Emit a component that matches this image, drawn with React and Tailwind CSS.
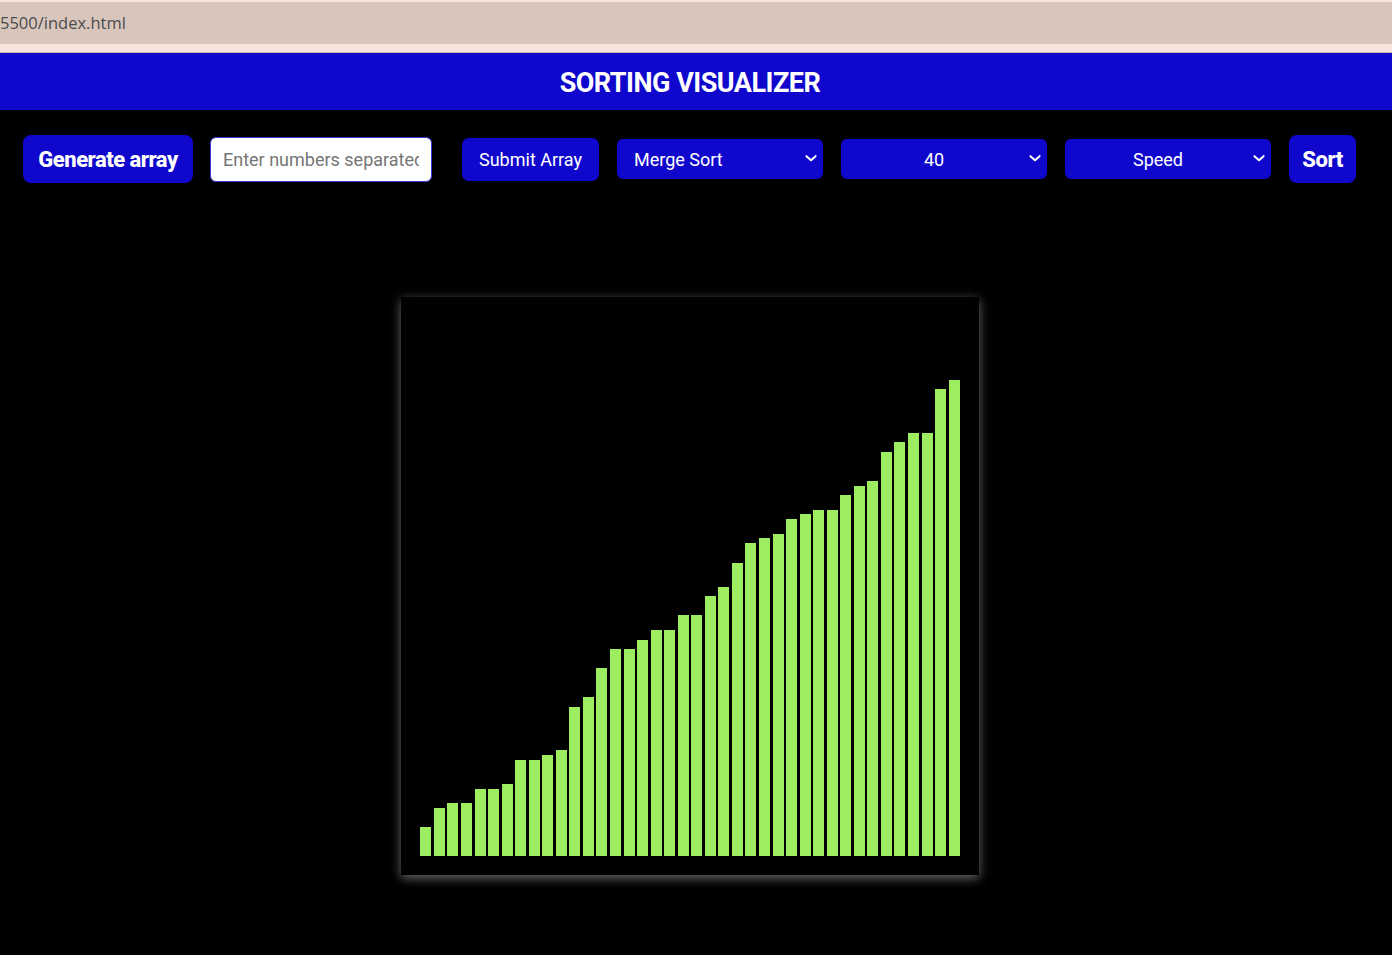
import React from 'react';

// bar heights in px, measured from the baseline
const BARS = [
  29, 48, 53, 53, 67, 67, 72, 96, 96, 101, 106, 149, 159, 188, 207, 207, 216, 226, 226, 241,
  241, 260, 269, 293, 313, 318, 322, 337, 342, 346, 346, 361, 370, 375, 404, 414, 423, 423, 467, 476,
];

const Chevron = () => (
  <svg width="22" height="22" viewBox="0 0 24 24" fill="none" stroke="currentColor" strokeWidth="2.2" strokeLinecap="round" strokeLinejoin="round">
    <path d="m7 10 5 4.5 5-4.5" />
  </svg>
);

const Select = ({ label, align = 'center', className = '' }) => (
  <div
    className={`relative flex items-center h-[40px] w-[206px] rounded-[6px] bg-[#0f07cc] text-white text-[18px] ${className}`}
  >
    <span className={`flex-1 ${align === 'left' ? 'text-left pl-[17px]' : 'text-center pr-[20px]'}`}>{label}</span>
    <span className="absolute right-[1px] top-[8px]">
      <Chevron />
    </span>
  </div>
);

export default function App() {
  return (
    <div className="min-h-[955px] bg-black font-['Roboto',sans-serif]">
      {/* browser chrome strip */}
      <div className="bg-[#f8e4dc] pt-[2px] pb-[8px] border-b border-[#c9b3b0]">
        <div className="h-[42px] bg-[#d8c6bd] flex items-center overflow-hidden">
          <span className="pt-[1px] text-[16.5px] text-[#4b4b4b] font-['Open_Sans',sans-serif]">5500/index.html</span>
        </div>
      </div>

      {/* header */}
      <div className="h-[57px] bg-[#0f07cc] flex items-center justify-center pr-[12px] pt-[3px]">
        <h1 className="text-white font-bold text-[27px] tracking-[-0.5px]">SORTING VISUALIZER</h1>
      </div>

      {/* controls */}
      <div className="flex items-center pl-[23px] mt-[25px] h-[48px]">
        <button className="h-[48px] w-[170px] rounded-[8px] bg-[#0f07cc] text-white font-extrabold text-[22px] tracking-[-0.5px]">
          Generate array
        </button>
        <input
          className="ml-[17px] h-[45px] w-[222px] rounded-[6px] bg-white border-[1.5px] border-[#3d35e0] px-[12px] text-[18px] text-black placeholder:text-[#767676] outline-none"
          placeholder="Enter numbers separated by commas"
        />
        <button className="ml-[30px] h-[43px] w-[137px] rounded-[7px] bg-[#0f07cc] text-white text-[18px]">
          Submit Array
        </button>
        <Select label="Merge Sort" align="left" className="ml-[18px]" />
        <Select label="40" className="ml-[18px]" />
        <Select label="Speed" className="ml-[18px]" />
        <button className="ml-[18px] h-[48px] w-[67px] rounded-[8px] bg-[#0f07cc] text-white font-extrabold text-[22px] tracking-[-0.5px]">
          Sort
        </button>
      </div>

      {/* chart */}
      <div className="flex justify-center mt-[114px] pr-[12px]">
        <div className="w-[578px] h-[578px] bg-black shadow-[0_3px_10px_rgba(210,210,210,0.5)] flex items-end justify-center gap-[2.56px] pb-[19px]">
          {BARS.map((h, i) => (
            <div key={i} className="w-[11px] bg-[#9eec60]" style={{ height: h }} />
          ))}
        </div>
      </div>
    </div>
  );
}
